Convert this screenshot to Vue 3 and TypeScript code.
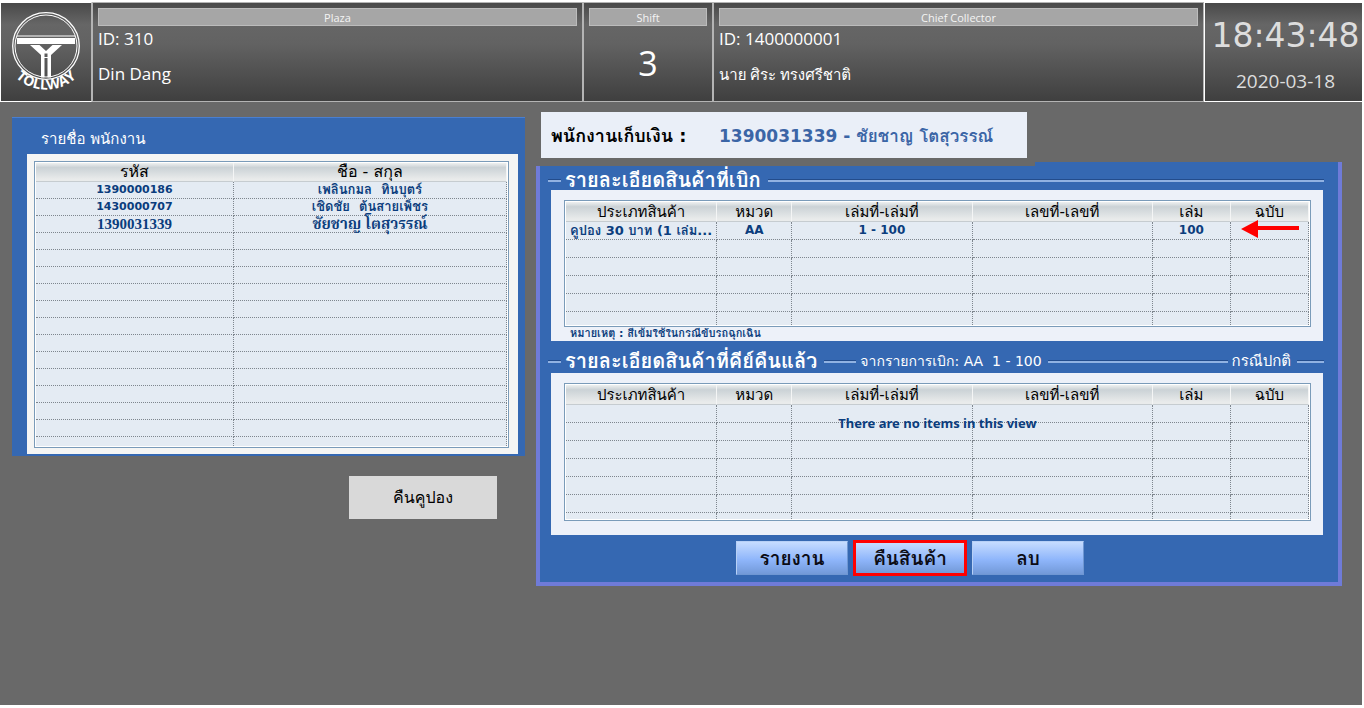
<script setup lang="ts">
interface Employee {
  id: string
  name: string
}

interface CouponRow {
  cells: string[]
}

const employees: Employee[] = [
  { id: '1390000186', name: 'เพลินกมล  ทินบุตร์' },
  { id: '1430000707', name: 'เชิดชัย  ต้นสายเพ็ชร' },
  { id: '1390031339', name: 'ชัยชาญ โตสุวรรณ์' },
]
const selectedId = '1390031339'
const emptyEmployeeRows = 13

const productColumns: string[] = ['ประเภทสินค้า', 'หมวด', 'เล่มที่-เล่มที่', 'เลขที่-เลขที่', 'เล่ม', 'ฉบับ']
const issued: CouponRow[] = [{ cells: ['คูปอง 30 บาท (1 เล่ม...', 'AA', '1 - 100', '', '100', ''] }]
const emptyIssuedRows = 5
const emptyReturnedRows = 7
</script>

<template>
  <div class="screen">
    <header class="topbar">
      <div class="cell logo">
        <svg width="76" height="82" viewBox="0 0 76 82" role="img" aria-label="Tollway">
          <defs>
            <path id="logo-arc" d="M-1 55A44 44 0 0 0 77 55" />
          </defs>
          <circle cx="38" cy="35" r="33.300" fill="none" stroke="#fff" stroke-width="1.3" />
          <circle cx="38" cy="35" r="31" fill="none" stroke="#fff" stroke-width="1" />
          <path d="M9 25H67" stroke="#fff" stroke-width="1" />
          <path d="M9 27H67V33H9Z" fill="#fff" />
          <path d="M22 34H31.500L38 40L44.500 34H54L43 44V66.500H39.500V42H36.500V66.500H33V44Z" fill="#fff" />
          <path d="M36 42H40M36 46.500H40" stroke="#fff" stroke-width="1" />
          <text class="logo-text"><textPath href="#logo-arc" startOffset="50%" text-anchor="middle">TOLLWAY</textPath></text>
        </svg>
      </div>
      <section class="cell plaza">
        <h2 class="cap">Plaza</h2>
        <p class="line">ID: 310</p>
        <p class="line">Din Dang</p>
      </section>
      <section class="cell shift">
        <h2 class="cap">Shift</h2>
        <p class="shift-no">3</p>
      </section>
      <section class="cell chief">
        <h2 class="cap">Chief Collector</h2>
        <p class="line">ID: 1400000001</p>
        <p class="line thai">นาย ศิระ ทรงศรีชาติ</p>
      </section>
      <div class="cell clock">
        <time class="time">18:43:48</time>
        <time class="date">2020-03-18</time>
      </div>
    </header>

    <main class="content">
      <div class="left">
        <section class="staff">
          <h1 class="staff-title">รายชื่อ พนักงาน</h1>
          <div class="staff-body">
            <div class="frame">
              <table class="grid staff-grid">
                <colgroup><col class="c-id"><col></colgroup>
                <thead>
                  <tr><th>รหัส</th><th>ชื่อ - สกุล</th></tr>
                </thead>
                <tbody>
                  <tr v-for="e in employees" :key="e.id" :class="{ picked: e.id === selectedId }"><td>{{ e.id }}</td><td class="name">{{ e.name }}</td></tr>
                  <tr v-for="n in emptyEmployeeRows" :key="n"><td></td><td></td></tr>
                </tbody>
              </table>
            </div>
          </div>
        </section>
        <button class="return-coupon" type="button">คืนคูปอง</button>
      </div>

      <div class="right">
        <div class="collector">
          <span class="collector-label">พนักงานเก็บเงิน :</span>
          <strong class="collector-name">1390031339 - ชัยชาญ โตสุวรรณ์</strong>
        </div>

        <section class="products">
          <div class="legend first">
            <i class="rule lead"></i>
            <h2>รายละเอียดสินค้าที่เบิก</h2>
            <i class="rule grow"></i>
          </div>
          <div class="sheet issued">
            <div class="frame">
              <table class="grid product-grid">
                <colgroup><col class="w-a"><col class="w-b"><col class="w-c"><col class="w-c"><col class="w-d"><col class="w-d"></colgroup>
                <thead>
                  <tr><th v-for="c in productColumns" :key="c">{{ c }}</th></tr>
                </thead>
                <tbody>
                  <tr v-for="(r, i) in issued" :key="i">
                    <td v-for="(c, j) in r.cells" :key="j" :class="{ kind: j === 0 }">{{ c }}<svg v-if="j === 5" class="arrow" width="58" height="18" viewBox="0 0 58 18" aria-hidden="true"><path d="M0 9L17 0V6H58V10H17V18Z" fill="#f00" /></svg></td>
                  </tr>
                  <tr v-for="n in emptyIssuedRows" :key="n" :class="{ cut: n === emptyIssuedRows }"><td v-for="c in productColumns" :key="c"></td></tr>
                </tbody>
              </table>
            </div>
            <p class="note">หมายเหตุ : สีเข้มใช้ในกรณีขับรถฉุกเฉิน</p>
          </div>

          <div class="legend second">
            <i class="rule lead"></i>
            <h2>รายละเอียดสินค้าที่คีย์คืนแล้ว</h2>
            <i class="rule mid"></i>
            <span class="from">จากรายการเบิก: AA&nbsp; 1 - 100</span>
            <i class="rule grow"></i>
            <span class="mode">กรณีปกติ</span>
            <i class="rule tail"></i>
          </div>
          <div class="sheet returned">
            <div class="frame">
              <table class="grid product-grid">
                <colgroup><col class="w-a"><col class="w-b"><col class="w-c"><col class="w-c"><col class="w-d"><col class="w-d"></colgroup>
                <thead>
                  <tr><th v-for="c in productColumns" :key="c">{{ c }}</th></tr>
                </thead>
                <tbody>
                  <tr v-for="n in emptyReturnedRows" :key="n" :class="{ last: n === emptyReturnedRows }"><td v-for="c in productColumns" :key="c"></td></tr>
                </tbody>
              </table>
              <p class="empty">There are no items in this view</p>
            </div>
          </div>

          <div class="actions">
            <button type="button">รายงาน</button>
            <button type="button" class="marked">คืนสินค้า</button>
            <button type="button">ลบ</button>
          </div>
        </section>
      </div>
    </main>
  </div>
</template>

<style>
body {
  margin: 0;
  background: #fff;
}
</style>

<style scoped>
* {
  box-sizing: border-box;
}
h1, h2, p {
  margin: 0;
  font-weight: 400;
}
.screen {
  margin: 2px 2px 0 0;
  min-height: calc(100vh - 5px);
  background: #696969;
  font-family: "DejaVu Sans", Loma, Waree, "Noto Sans Thai Looped", sans-serif;
}
.topbar {
  display: grid;
  grid-template-columns: 92px minmax(0, 491fr) 130px minmax(0, 491fr) 158px;
  font-family: "Open Sans", Loma, Waree, "Noto Sans Thai Looped", sans-serif;
  color: #fff;
}
.cell {
  border: 1px solid #b4b4b4;
  background: linear-gradient(#494949, #666 22%, #626262 42%, #3f3f3f);
  padding: 5px 5px 1px;
}
.logo {
  border-color: #fff;
  border-right-color: #b4b4b4;
  display: flex;
  justify-content: center;
}
.logo svg {
  margin-top: 3px;
}
.logo-text {
  font: 700 14px "Open Sans", sans-serif;
  fill: #fff;
}
.logo svg {
  overflow: visible;
}
.clock {
  border-color: #fff;
  border-right: 0;
  padding: 5px 0 1px 4px;
  display: flex;
  flex-direction: column;
  align-items: center;
  color: #ddd;
}
.cap {
  height: 18px;
  border: 1px solid #bcbcbc;
  background: #a6a6a6;
  font-size: 11px;
  line-height: 17px;
  text-align: center;
  color: #f4f4f4;
}
.line {
  font-size: 17px;
  line-height: 26px;
}
.line + .line {
  margin-top: 9px;
}
.line.thai {
  font-size: 15px;
}
.shift-no {
  font-size: 34px;
  line-height: 74px;
  text-align: center;
}
.time {
  font-family: "DejaVu Sans", sans-serif;
  font-size: 33px;
  line-height: 55px;
}
.date {
  font-size: 19px;
  line-height: 36px;
}
.content {
  display: grid;
  grid-template-columns: minmax(0, 513fr) minmax(0, 806fr);
  column-gap: 11px;
  align-items: start;
  padding: 10px 20px 0 12px;
}
.left {
  padding-top: 5px;
}
.staff {
  background: #3568b2;
  border-top: 1px solid #4a7fd0;
  padding: 0 7px 2px 15px;
}
.staff-title {
  height: 36px;
  padding-left: 14px;
  font-size: 15px;
  line-height: 42px;
  color: #fff;
}
.staff-body {
  background: #f5f5f4;
  padding: 7px 9px 6px 7px;
}
.frame {
  position: relative;
  border: 1px solid #7a9bb9;
  background: #fff;
  padding: 1px;
}
.grid {
  width: 100%;
  table-layout: fixed;
  border-collapse: separate;
  border-spacing: 0;
  background: #e4ebf3;
  color: #0b3d7d;
}
.c-id {
  width: 42%;
}
.grid th,
.grid td {
  padding: 0;
  text-align: center;
  white-space: pre;
  overflow: hidden;
}
.grid th {
  height: 20px;
  background: linear-gradient(#eef0f0, #cbd2d6 25%, #e9ebeb 90%);
  border-right: 1px solid #f4f5f5;
  border-bottom: 1px solid #c6ccd0;
  font-size: 15px;
  line-height: 18px;
  font-weight: 400;
  color: #000;
}
.grid td {
  height: 18px;
  border-right: 1px dotted #7e868e;
  border-bottom: 1px dotted #7e868e;
  font-size: 12px;
  line-height: 17px;
  font-weight: 700;
}
.grid .kind {
  font-size: 13px;
}
.staff-grid th {
  height: 19px;
  font-size: 16px;
}
.staff-grid td {
  height: 17px;
  line-height: 16px;
  font-size: 11px;
}
.staff-grid .name {
  font-size: 13px;
}
.staff-grid .picked td {
  font-family: "Liberation Serif", Norasi, "Noto Serif Thai", serif;
  font-size: 15px;
}
.staff-grid tr:last-child td {
  height: 9px;
  border-bottom: 0;
}
.return-coupon {
  display: block;
  margin: 20px 28px 0 auto;
  width: 148px;
  height: 43px;
  border: 0;
  padding: 0;
  background: #d9d9d9;
  font: inherit;
  font-size: 16px;
  color: #000;
}
.collector {
  display: flex;
  align-items: center;
  width: 486px;
  height: 46px;
  margin-left: 5px;
  padding-left: 10px;
  background: #eaeff8;
  white-space: nowrap;
}
.collector-label {
  width: 168px;
  font-size: 18px;
  font-weight: 700;
}
.collector-name {
  font-size: 17px;
  color: #3b65a6;
}
.products {
  position: relative;
  margin-top: 8px;
  border: solid #6f7bd8;
  border-width: 0 4px 4px;
  background: #3568b2;
  padding: 0 15px 6px 11px;
}
.products::before {
  content: "";
  position: absolute;
  top: -4px;
  right: -4px;
  width: 38%;
  height: 4px;
  background: #3568b2;
  border-right: 4px solid #6f7bd8;
}
.legend {
  display: flex;
  align-items: center;
  margin: 0 -1px 0 -3px;
  color: #fff;
  white-space: nowrap;
}
.first {
  height: 24px;
  padding-top: 4px;
}
.second {
  height: 32px;
  padding-top: 8px;
}
.legend h2 {
  margin: 0 7px 0 4px;
  font-size: 20px;
  line-height: 20px;
  font-weight: 700;
}
.rule {
  height: 3px;
  border-top: 1px solid #234c8c;
  background: #91b2e2;
}
.lead {
  width: 13px;
}
.grow {
  flex: 1;
}
.mid {
  width: 32px;
}
.tail {
  width: 27px;
}
.from,
.mode {
  margin: 0 6px 0 4px;
  font-size: 14px;
  line-height: 20px;
}
.mode {
  font-size: 15px;
}
.sheet {
  background: #edf1f9;
  padding: 10px 12px 0 13px;
}
.issued {
  height: 151px;
}
.returned {
  height: 162px;
}
.w-a {
  width: 151px;
}
.w-b {
  width: 75px;
}
.w-c {
  width: 180px;
}
.w-d {
  width: 78px;
}
.product-grid .cut td {
  height: 13px;
  border-bottom: 0;
}
.product-grid .last td {
  height: 6px;
  border-bottom: 0;
}
.grid td:last-child {
  overflow: visible;
}
.arrow {
  position: absolute;
  right: 11px;
  top: 19px;
}
.note {
  padding-left: 6px;
  font-size: 11px;
  line-height: 14px;
  font-weight: 700;
  color: #0b3d7d;
}
.empty {
  position: absolute;
  inset: 29px 0 auto 0;
  font: 700 13px/20px "Noto Sans", sans-serif;
  text-align: center;
  color: #0b3d7d;
}
.actions {
  display: flex;
  justify-content: center;
  align-items: center;
  gap: 5px;
  padding-top: 5px;
  margin-right: 54px;
}
.actions button {
  width: 112px;
  height: 34px;
  border: 1px solid #7fa6dc;
  border-color: #b7d0f6 #6f97d3 #6f97d3 #b7d0f6;
  padding: 0;
  background: linear-gradient(#c6dcff, #8fb6fb 55%, #7299d8);
  font: inherit;
  font-size: 19px;
  font-weight: 700;
  color: #0c0c14;
}
.actions .marked {
  width: 114px;
  height: 36px;
  border: 3px solid #f00;
}
</style>
